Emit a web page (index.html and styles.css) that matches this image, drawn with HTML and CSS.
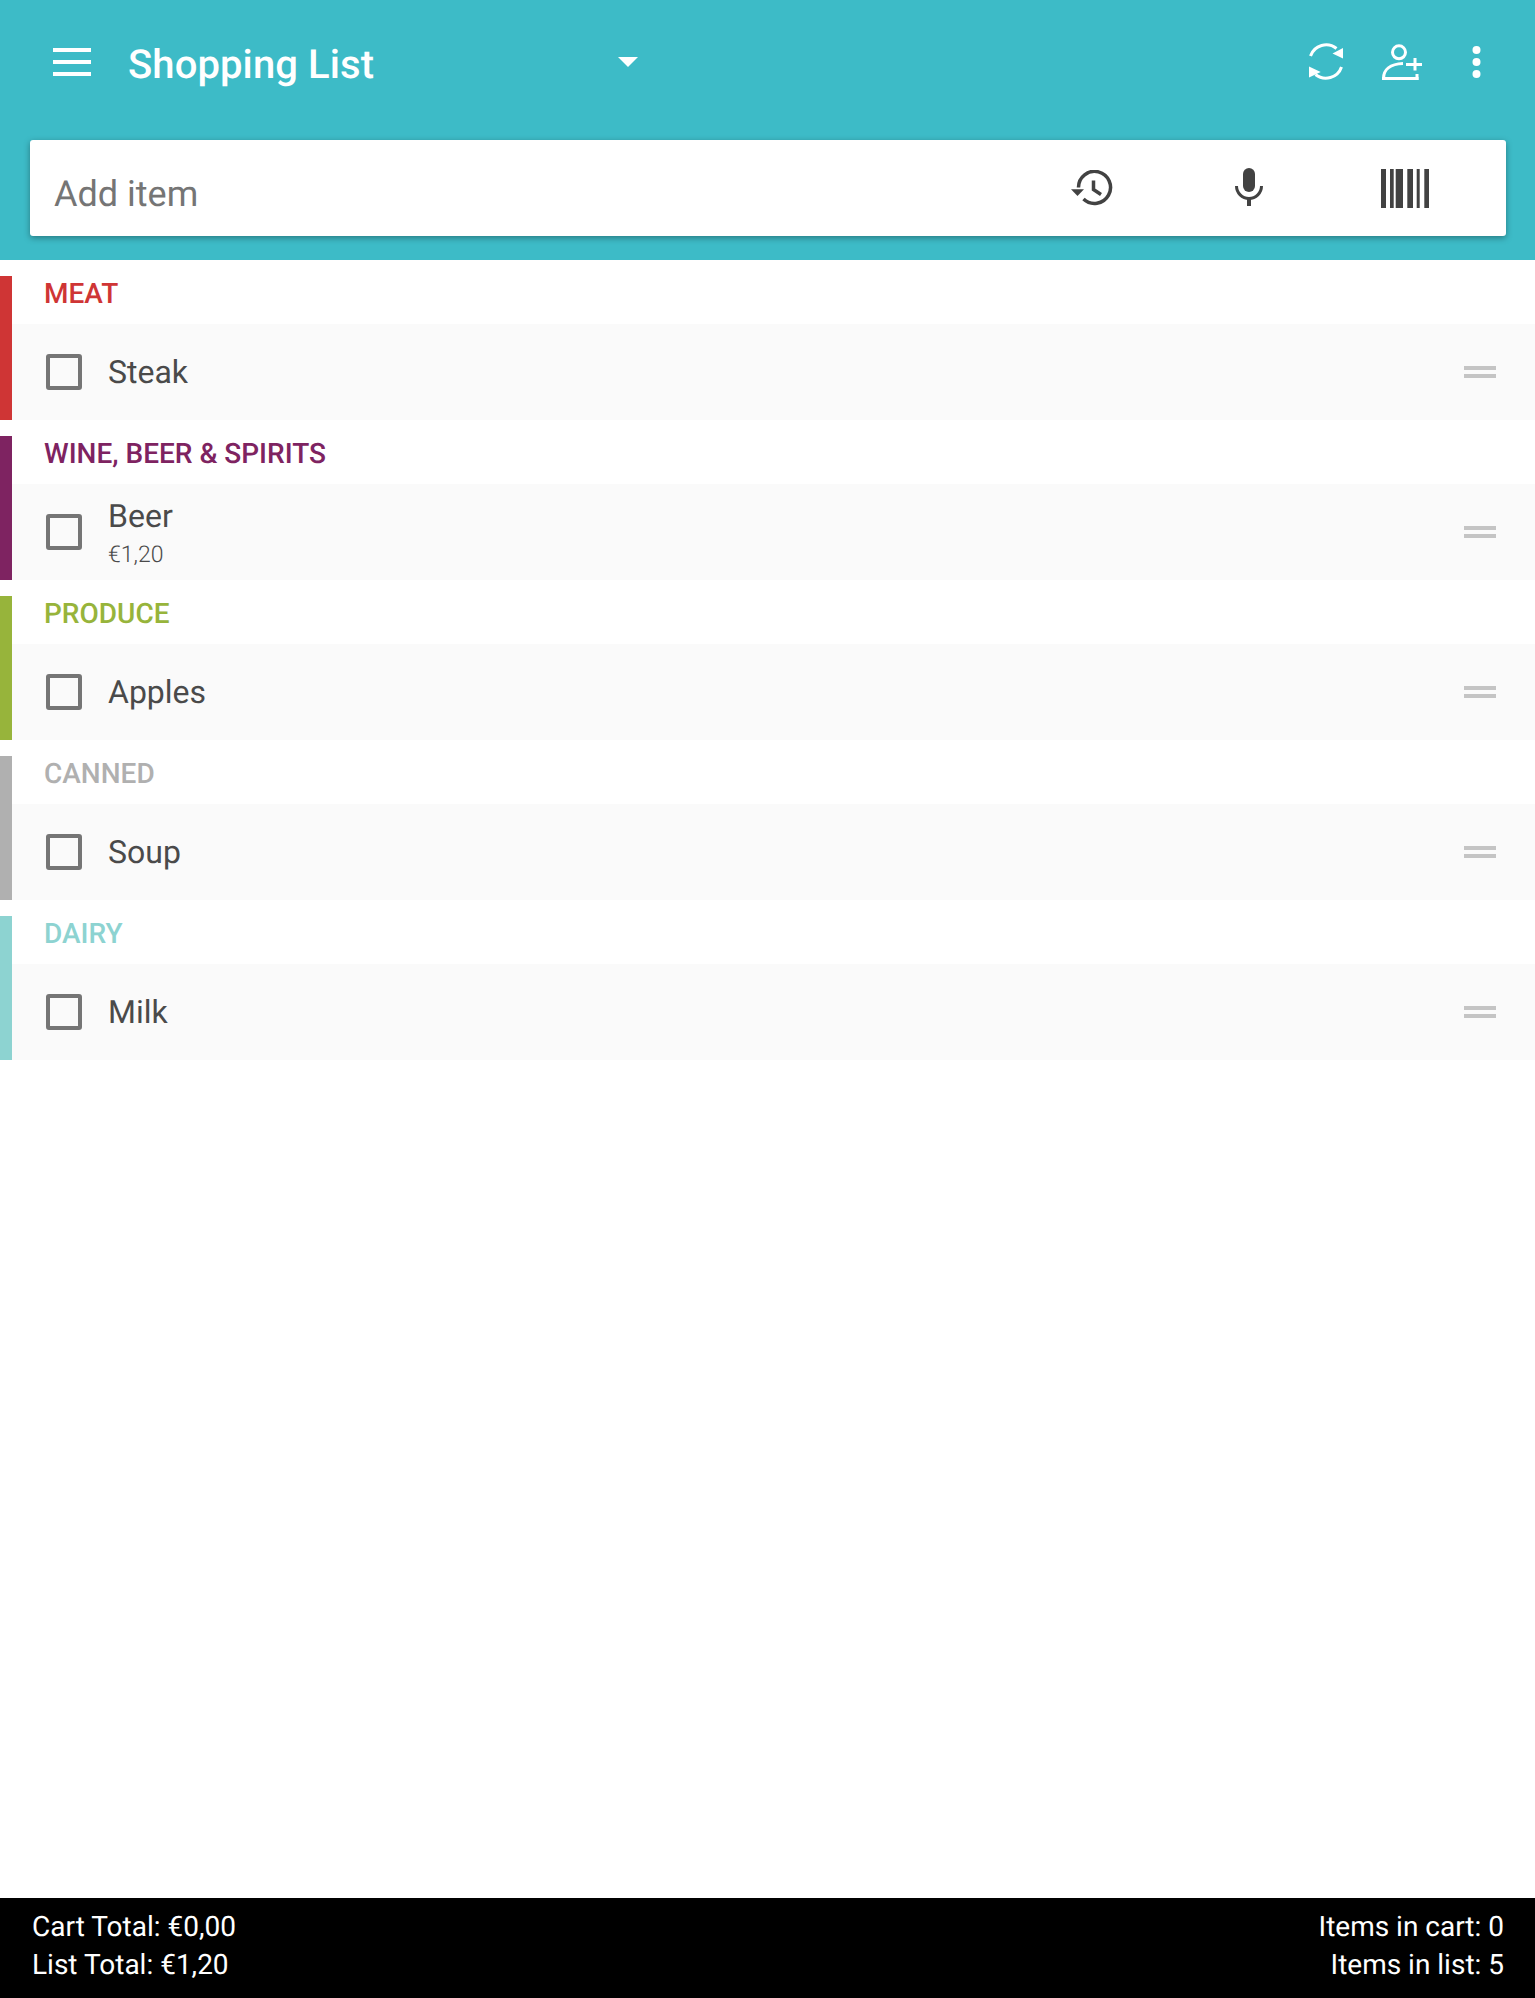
FILE: index.html
```html
<!DOCTYPE html>
<html lang="en">
<head>
<meta charset="utf-8">
<title>Shopping List</title>
<link rel="stylesheet" href="styles.css">
</head>
<body>
<div class="page">
  <header class="appbar">
    <div class="toolbar">
      <div class="hamburger"><span></span><span></span><span></span></div>
      <div class="title">Shopping List</div>
      <div class="caret"></div>
      <svg class="ic-sync" viewBox="0 0 36 38" width="36" height="38" fill="none" stroke="#fff" stroke-width="3"><path d="M2.500 13A16.500 16.500 0 0 1 28.500 5.500"/><path d="M33.500 24A16.500 16.500 0 0 1 7.500 31.500"/><path d="M35 5V15.500L24.500 10.500Z" fill="#fff" stroke="none"/><path d="M1 23.500V34.500L12.700 29Z" fill="#fff" stroke="none"/></svg>
      <svg class="ic-person" viewBox="0 0 40 38" width="40" height="38" fill="none" stroke="#fff" stroke-width="3"><circle cx="17" cy="9.300" r="6.500"/><path d="M1.500 35.500C1.500 27 8 21 21 20.500"/><path d="M0 35.500H36.500"/><path d="M35 31V37"/><path d="M33 15V27.500M24 21.500H40"/></svg>
      <svg class="ic-dots" viewBox="0 0 9 32" width="9" height="32" fill="#fff"><circle cx="4.500" cy="4" r="4"/><circle cx="4.500" cy="16" r="4"/><circle cx="4.500" cy="28" r="4"/></svg>
    </div>
    <div class="search">
      <span class="placeholder">Add item</span>
      <svg class="ic-history" viewBox="0 0 42 37" width="42" height="37" fill="none" stroke="#424242" stroke-width="3.500"><path d="M7.500 17.500A16 16 0 1 1 12.500 29"/><path d="M22.500 10.500V19.500L30 24.500"/><path d="M0 19.300H13L6.500 26Z" fill="#424242" stroke="none"/></svg>
      <svg class="ic-mic" viewBox="0 0 28 38" width="28" height="38" fill="#424242"><rect x="8" y="0" width="12" height="24" rx="6"/><path d="M1.500 18A12.500 12.500 0 0 0 26.500 18" fill="none" stroke="#424242" stroke-width="3"/><rect x="12" y="30" width="4" height="8"/></svg>
      <svg class="ic-barcode" viewBox="0 0 48 39" width="48" height="39" fill="#424242"><rect x="0" width="5" height="39"/><rect x="9" width="3.700" height="39"/><rect x="14.700" width="7.300" height="39"/><rect x="26.300" width="5.700" height="39"/><rect x="35.700" width="3" height="39"/><rect x="43.300" width="4.700" height="39"/></svg>
    </div>
  </header>

  <main class="list">
    <section class="group group-meat">
      <h2 class="cat">MEAT</h2>
      <div class="item">
        <span class="check"></span>
        <div class="text"><div class="name">Steak</div></div>
        <span class="handle"></span>
      </div>
    </section>
    <section class="group group-wine">
      <h2 class="cat">WINE, BEER &amp; SPIRITS</h2>
      <div class="item">
        <span class="check"></span>
        <div class="text"><div class="name">Beer</div><div class="price">€1,20</div></div>
        <span class="handle"></span>
      </div>
    </section>
    <section class="group group-produce">
      <h2 class="cat">PRODUCE</h2>
      <div class="item">
        <span class="check"></span>
        <div class="text"><div class="name">Apples</div></div>
        <span class="handle"></span>
      </div>
    </section>
    <section class="group group-canned">
      <h2 class="cat">CANNED</h2>
      <div class="item">
        <span class="check"></span>
        <div class="text"><div class="name">Soup</div></div>
        <span class="handle"></span>
      </div>
    </section>
    <section class="group group-dairy">
      <h2 class="cat">DAIRY</h2>
      <div class="item">
        <span class="check"></span>
        <div class="text"><div class="name">Milk</div></div>
        <span class="handle"></span>
      </div>
    </section>
  </main>

  <footer class="totals">
    <div><div>Cart Total: €0,00</div><div>List Total: €1,20</div></div>
    <div class="right"><div>Items in cart: 0</div><div>Items in list: 5</div></div>
  </footer>
</div>
</body>
</html>
```
FILE: styles.css
```css
* { box-sizing: border-box; }
html, body { margin: 0; padding: 0; }
body { background: #fff; font-family: Roboto, "Liberation Sans", sans-serif; text-rendering: geometricPrecision; }
.page { width: 1535px; height: 1998px; display: flex; flex-direction: column; overflow: hidden; }

.appbar { height: 260px; background: #3dbbc7; padding: 43px 29px 24px 30px; display: flex; flex-direction: column; flex: none; }
.toolbar { height: 38px; display: flex; align-items: center; margin-bottom: 59px; }
.hamburger { width: 38px; margin-left: 23px; display: flex; flex-direction: column; gap: 8px; flex: none; }
.hamburger span { display: block; height: 4px; background: #fff; }
.title { margin-left: 37px; margin-top: 6px; width: 490px; color: #fff; font-size: 40px; font-weight: 500; letter-spacing: .1px; line-height: 38px; white-space: nowrap; }
.caret { width: 0; height: 0; border-left: 10px solid transparent; border-right: 10px solid transparent; border-top: 10px solid #fff; flex: none; }
.ic-sync { margin-left: 670px; flex: none; }
.ic-person { margin-left: 38px; flex: none; }
.ic-dots { margin-left: 50px; flex: none; }

.search { height: 96px; background: #fff; border-radius: 3px; box-shadow: 0 2px 6px rgba(0,0,0,.35); display: flex; align-items: center; padding-left: 24px; flex: none; }
.placeholder { width: 1017px; padding-top: 12px; font-size: 36px; color: #757575; white-space: nowrap; }
.ic-history { flex: none; }
.ic-mic { margin-left: 122px; margin-bottom: 2px; flex: none; }
.ic-barcode { margin-left: 118px; flex: none; }

.list { flex: 1; }
.group { margin-top: 16px; border-left: 12px solid; }
.group-meat { border-color: #cf3535; color: #cf3535; }
.group-wine { border-color: #7e2361; color: #7e2361; }
.group-produce { border-color: #97b43b; color: #97b43b; }
.group-canned { border-color: #b0b0b0; color: #b0b0b0; }
.group-dairy { border-color: #8dd3d1; color: #8dd3d1; }
.cat { margin: 0; height: 48px; padding-left: 32px; font-size: 28px; font-weight: 500; line-height: 36px; }
.item { height: 96px; background: #fafafa; display: flex; align-items: center; padding-left: 34px; padding-right: 39px; }
.check { width: 36px; height: 36px; border: 4px solid #757575; border-radius: 3px; flex: none; }
.text { margin-left: 26px; flex: 1; color: #4a4a4a; }
.name { font-size: 32px; line-height: 38px; }
.price { font-size: 23px; font-weight: 300; line-height: 32px; margin-top: 4px; margin-bottom: -4px; }
.handle { width: 32px; height: 12px; border-top: 4px solid #c4c4c4; border-bottom: 4px solid #c4c4c4; flex: none; }

.totals { height: 100px; background: #000; color: #fff; font-size: 28px; line-height: 38px; display: flex; justify-content: space-between; padding: 10px 31px 0 32px; flex: none; }
.right { text-align: right; }
```
